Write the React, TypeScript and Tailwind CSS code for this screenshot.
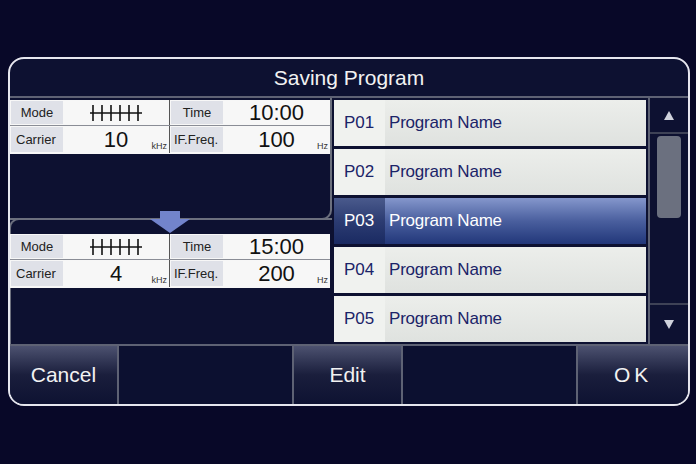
import React from "react";

const ModeIcon = () => (
  <svg width="54" height="18" viewBox="0 0 54 18">
    <line x1="1" y1="9" x2="53" y2="9" stroke="#111" strokeWidth="1.6" />
    {[4, 13, 22, 31, 40, 49].map((x) => (
      <line key={x} x1={x} y1="1" x2={x} y2="17" stroke="#111" strokeWidth="1.6" />
    ))}
  </svg>
);

function InfoTable({ time, carrier, freq }: { time: string; carrier: string; freq: string }) {
  return (
    <div className="w-[320px] h-[54px] bg-[#f7f7f7] flex flex-col">
      <div className="flex h-[26px] border-b border-[#8a8d96]">
        <div className="w-[52px] m-[1px] mr-0 bg-[#dfe1e8] flex items-center justify-center text-[13px] text-[#222]">Mode</div>
        <div className="w-[107px] flex items-center justify-center border-r border-[#555]">
          <ModeIcon />
        </div>
        <div className="w-[52px] m-[1px] mr-0 bg-[#dfe1e8] flex items-center justify-center text-[13px] text-[#222]">Time</div>
        <div className="flex-1 flex items-center justify-center text-[22px] text-[#111] leading-none">{time}</div>
      </div>
      <div className="flex h-[27px]">
        <div className="w-[52px] m-[1px] mr-0 bg-[#dfe1e8] flex items-center pl-[5px] text-[13px] text-[#222]">Carrier</div>
        <div className="w-[107px] relative flex items-center justify-center border-r border-[#555] text-[22px] text-[#111] leading-none">
          {carrier}
          <span className="absolute right-[2px] bottom-[2px] text-[9px] leading-none text-[#333]">kHz</span>
        </div>
        <div className="w-[52px] m-[1px] mr-0 bg-[#dfe1e8] flex items-center pl-[3px] text-[13px] text-[#222] whitespace-nowrap">IF.Freq.</div>
        <div className="flex-1 relative flex items-center justify-center text-[22px] text-[#111] leading-none">
          {freq}
          <span className="absolute right-[2px] bottom-[2px] text-[9px] leading-none text-[#333]">Hz</span>
        </div>
      </div>
    </div>
  );
}

function Row({ id, selected }: { id: string; selected?: boolean }) {
  if (selected) {
    return (
      <div className="h-[46px] flex bg-gradient-to-b from-[#8597cc] via-[#4a5f9e] to-[#22377a]">
        <div className="w-[51px] flex items-center pl-[10px] text-[17px] text-white bg-gradient-to-b from-[#4a5a8c] via-[#2c3c72] to-[#1a2a62]">{id}</div>
        <div className="flex-1 flex items-center pl-[4px] text-[17px] text-white tracking-[-0.2px]">Program Name</div>
      </div>
    );
  }
  return (
    <div className="h-[46px] flex bg-gradient-to-b from-[#eceeeb] to-[#dfe2df]">
      <div className="w-[51px] flex items-center pl-[10px] text-[17px] text-[#1b2468] bg-[#f0f2ef]">{id}</div>
      <div className="flex-1 flex items-center pl-[4px] text-[17px] text-[#1b2468] tracking-[-0.2px]">Program Name</div>
    </div>
  );
}

function Btn({ label, w, wide }: { label: string; w: string; wide?: boolean }) {
  return (
    <div className={`${w} h-full flex items-center justify-center bg-gradient-to-b from-[#4d5270] via-[#1a1e3c] to-[#0e1232] text-[21px] text-[#f2f2f2] ${wide ? "tracking-[4px]" : ""}`}>
      {label}
    </div>
  );
}

export default function App() {
  return (
    <div className="w-[696px] h-[464px] bg-[#080828] pt-[57px] pl-[8px] font-['Liberation_Sans',Arial,sans-serif]">
      <div className="w-[682px] h-[349px] border-2 border-[#e6e6ee] rounded-[16px] bg-[#0d1131] flex flex-col overflow-hidden">
        <div className="h-[37px] flex items-center justify-center text-[21px] text-[#f2f2f2]">Saving Program</div>
        <div className="h-[2px] bg-[#5e6274]" />
        <div className="h-[246px] flex">
          {/* left */}
          <div className="w-[322px] relative flex flex-col">
            <div className="h-[122px] border-r-2 border-b-2 border-[#6c707e] rounded-br-[10px] pt-[2px]">
              <InfoTable time="10:00" carrier="10" freq="100" />
            </div>
            <div className="flex-1 -mt-[2px] border-t-2 border-l-2 border-[#6c707e] rounded-tl-[10px] pt-[14px] -ml-[1px]">
              <div className="-ml-[1px]">
                <InfoTable time="15:00" carrier="4" freq="200" />
              </div>
            </div>
            <div className="absolute left-[140px] top-[113px] flex flex-col items-center">
              <div className="w-[20px] h-[8px] bg-[#7284cc]" />
              <div className="w-0 h-0 border-l-[20px] border-r-[20px] border-t-[14px] border-l-transparent border-r-transparent border-t-[#7284cc]" />
            </div>
          </div>
          {/* list */}
          <div className="w-[312px] ml-[2px] pt-[2px] flex flex-col gap-[3px]">
            <Row id="P01" />
            <Row id="P02" />
            <Row id="P03" selected />
            <Row id="P04" />
            <Row id="P05" />
          </div>
          {/* scrollbar */}
          <div className="w-[40px] ml-[2px] border-l-2 border-[#5e6274] flex flex-col">
            <div className="h-[36px] border-b-2 border-[#3e4256] flex items-center justify-center">
              <div className="w-0 h-0 border-l-[5px] border-r-[5px] border-b-[9px] border-l-transparent border-r-transparent border-b-[#cfd2dc]" />
            </div>
            <div className="flex-1 px-[7px] pt-[2px]">
              <div className="h-[82px] rounded-[4px] bg-[#6b707f]" />
            </div>
            <div className="h-[41px] border-t-2 border-[#3e4256] flex items-center justify-center">
              <div className="w-0 h-0 border-l-[5px] border-r-[5px] border-t-[9px] border-l-transparent border-r-transparent border-t-[#cfd2dc]" />
            </div>
          </div>
        </div>
        <div className="h-[2px] bg-[#5e6274]" />
        <div className="flex-1 flex bg-[#5e6274] gap-[2px]">
          <Btn label="Cancel" w="w-[107px]" />
          <div className="w-[173px] h-full bg-[#0c1030]" />
          <Btn label="Edit" w="w-[108px]" />
          <div className="w-[173px] h-full bg-[#0c1030]" />
          <Btn label="OK" w="w-[110px]" wide />
        </div>
      </div>
    </div>
  );
}
